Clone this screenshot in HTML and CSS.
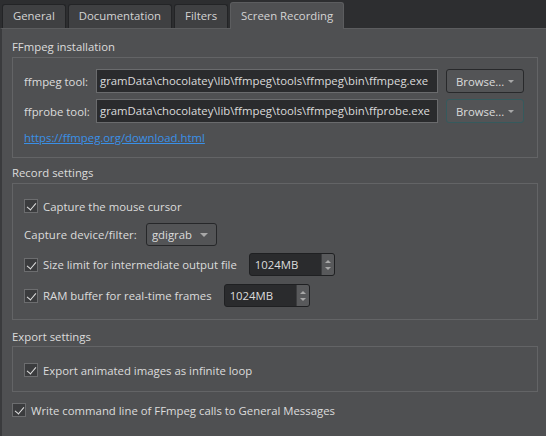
FILE: index.html
```html
<!DOCTYPE html>
<html>
<head>
<meta charset="utf-8">
<link rel="stylesheet" href="styles.css">
</head>
<body>
<div class="tabbar">
  <div class="tab">General</div>
  <div class="tab">Documentation</div>
  <div class="tab">Filters</div>
  <div class="tab active">Screen Recording</div>
</div>
<div class="pane">
  <div class="group g1">
    <div class="gtitle">FFmpeg installation</div>
    <div class="frame install">
      <div class="row">
        <span class="lbl">ffmpeg tool:</span>
        <div class="edit">gramData\chocolatey\lib\ffmpeg\tools\ffmpeg\bin\ffmpeg.exe</div>
        <div class="btn">Browse...<span class="arrow"></span></div>
      </div>
      <div class="row">
        <span class="lbl">ffprobe tool:</span>
        <div class="edit">gramData\chocolatey\lib\ffmpeg\tools\ffmpeg\bin\ffprobe.exe</div>
        <div class="btn focus">Browse...<span class="arrow"></span></div>
      </div>
      <a class="link">https://ffmpeg.org/download.html</a>
    </div>
  </div>
  <div class="group g2">
    <div class="gtitle">Record settings</div>
    <div class="frame record">
      <div class="check"><span class="box"></span>Capture the mouse cursor</div>
      <div class="row2 r1">
        <span class="clbl">Capture device/filter:</span>
        <div class="combo">gdigrab<span class="arrow"></span></div>
      </div>
      <div class="row2 r2">
        <div class="check"><span class="box"></span>Size limit for intermediate output file</div>
        <div class="spin">1024MB<span class="updown"><i class="up"></i><i class="dn"></i></span></div>
      </div>
      <div class="row2 r3">
        <div class="check"><span class="box"></span>RAM buffer for real-time frames</div>
        <div class="spin">1024MB<span class="updown"><i class="up"></i><i class="dn"></i></span></div>
      </div>
    </div>
  </div>
  <div class="group g3">
    <div class="gtitle">Export settings</div>
    <div class="frame export">
      <div class="check"><span class="box"></span>Export animated images as infinite loop</div>
    </div>
  </div>
  <div class="check last"><span class="box"></span>Write command line of FFmpeg calls to General Messages</div>
</div>
</body>
</html>
```
FILE: styles.css
```css
* { box-sizing: border-box; }
html, body { margin: 0; }
body {
  background: #2d2e30;
  font-family: "Open Sans", "Noto Sans", sans-serif;
  font-size: 11.35px;
  color: #dcdcdc;
  width: 546px;
  height: 436px;
  overflow: hidden;
}
.tabbar {
  display: flex;
  align-items: flex-end;
  height: 28px;
  padding-left: 2px;
  gap: 2px;
}
.tab {
  height: 24px;
  padding: 0 10px;
  line-height: 22px;
  background: #3f4042;
  border: 1px solid #232426;
  border-bottom: none;
  border-radius: 3px 3px 0 0;
  color: #d4d4d4;
}
.tab.active {
  height: 27px;
  line-height: 25px;
  background: #4f5052;
  border-color: #5c5d5f;
  margin-bottom: -1px;
  position: relative;
  z-index: 1;
}
.pane {
  background: #4f5052;
  border-top: 1px solid #5c5d5f;
  border-left: 2px solid #3a3b3d;
  height: 408px;
  padding: 9px 8px 0 10px;
}
.gtitle {
  height: 18px;
  line-height: 18px;
  margin-bottom: 1px;
}
.frame {
  border: 1px solid #636466;
  padding: 0 11px;
}
.install { height: 101px; padding-top: 11px; }
.row {
  display: flex;
  align-items: center;
  height: 24px;
  margin-bottom: 6px;
}
.lbl { width: 72px; white-space: nowrap; }
.edit {
  width: 342px;
  height: 24px;
  line-height: 22px;
  background: #2a2b2d;
  border: 1px solid #6a6b6d;
  padding-left: 3px;
  white-space: nowrap;
  overflow: hidden;
}
.btn {
  margin-left: 8px;
  width: 78px;
  height: 24px;
  border: 1px solid #28292b;
  border-radius: 3px;
  background: #535456;
  display: flex;
  align-items: center;
  padding-left: 9px;
}
.btn.focus { border-color: #355a5d; }
.arrow {
  margin-left: auto;
  margin-right: 9px;
  width: 0; height: 0;
  border-left: 3px solid transparent;
  border-right: 3px solid transparent;
  border-top: 3px solid #a8a8a8;
}
.link {
  display: block;
  height: 18px;
  line-height: 18px;
  color: #3a90e8;
  text-decoration: underline;
}
.g1 { margin-bottom: 6px; }
.g2 { margin-bottom: 8px; }
.g3 .gtitle { margin-bottom: 0; }
.record { height: 137px; padding-top: 13px; }
.check {
  display: flex;
  align-items: center;
  height: 18px;
  white-space: nowrap;
}
.box {
  width: 14px; height: 14px;
  border: 1px solid #6c6d6f;
  background: #3b3c3e;
  margin-right: 5px;
  position: relative;
  flex: none;
}
.box::after {
  content: "";
  position: absolute;
  left: 4px; top: 1px;
  width: 4px; height: 8px;
  border-right: 1.6px solid #e2e2e2;
  border-bottom: 1.6px solid #e2e2e2;
  transform: rotate(40deg);
}
.row2 {
  display: flex;
  align-items: center;
  height: 23px;
}
.r1 { margin-top: 8px; }
.r2 { margin-top: 7px; }
.r3 { margin-top: 8px; }
.clbl { letter-spacing: 0.1px; }
.combo {
  margin-left: 9px;
  width: 71px;
  height: 23px;
  border: 1px solid #262729;
  border-radius: 3px;
  background: #535456;
  display: flex;
  align-items: center;
  padding-left: 5px;
}
.combo .arrow { margin-right: 8px; border-left-width: 4px; border-right-width: 4px; border-top-width: 4px; }
.spin {
  margin-left: 12px;
  height: 23px;
  width: 86px;
  background: #2a2b2d;
  border: 1px solid #1f2022;
  border-radius: 3px;
  display: flex;
  align-items: center;
  padding-left: 5px;
}
.updown {
  margin-left: auto;
  width: 13px;
  height: 21px;
  background: #58595b;
  border-left: 1px solid #3c3d3f;
  border-radius: 0 2px 2px 0;
  display: flex;
  flex-direction: column;
  align-items: center;
  justify-content: center;
  gap: 4px;
}
.up, .dn { width: 0; height: 0; border-left: 3px solid transparent; border-right: 3px solid transparent; }
.up { border-bottom: 3px solid #a8a8a8; }
.dn { border-top: 3px solid #a8a8a8; }
.export { height: 46px; padding-top: 14px; }
.last { margin-top: 9px; }
```
